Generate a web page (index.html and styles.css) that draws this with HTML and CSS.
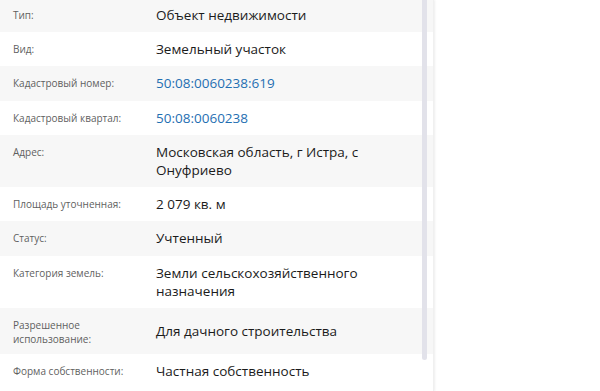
FILE: index.html
```html
<!DOCTYPE html>
<html lang="ru">
<head>
<meta charset="utf-8">
<title>Объект недвижимости</title>
<link rel="stylesheet" href="styles.css">
</head>
<body>
<div class="panel">
  <div class="props">
    <div class="row"><div class="label">Тип:</div><div class="value">Объект недвижимости</div></div>
    <div class="row"><div class="label">Вид:</div><div class="value">Земельный участок</div></div>
    <div class="row"><div class="label">Кадастровый номер:</div><div class="value"><a class="link" href="#">50:08:0060238:619</a></div></div>
    <div class="row"><div class="label">Кадастровый квартал:</div><div class="value"><a class="link" href="#">50:08:0060238</a></div></div>
    <div class="row"><div class="label">Адрес:</div><div class="value">Московская область, г Истра, с Онуфриево</div></div>
    <div class="row"><div class="label">Площадь уточненная:</div><div class="value">2 079 кв. м</div></div>
    <div class="row"><div class="label">Статус:</div><div class="value">Учтенный</div></div>
    <div class="row"><div class="label">Категория земель:</div><div class="value">Земли сельскохозяйственного назначения</div></div>
    <div class="row"><div class="label">Разрешенное использование:</div><div class="value">Для дачного строительства</div></div>
    <div class="row"><div class="label">Форма собственности:</div><div class="value">Частная собственность</div></div>
  </div>
  <div class="scroll-thumb"></div>
</div>
</body>
</html>
```
FILE: styles.css
```css
html, body {
  margin: 0;
  padding: 0;
  background: #ffffff;
  overflow: hidden;
  height: 100%;
}

body {
  font-family: "Open Sans", "Noto Sans", sans-serif;
}

.panel {
  position: relative;
  width: 433px;
  height: 100%;
  overflow: hidden;
  box-shadow: 1px 0 2px rgba(0, 0, 0, 0.07);
  border-right: 1px solid #f0f0f0;
}

.props {
  margin-top: -2px;
}

.row {
  display: flex;
  align-items: center;
  padding: 8px 0;
}

.row:nth-child(odd) {
  background: #f7f7f7;
}

.label {
  align-self: flex-start;
  box-sizing: border-box;
  flex: 0 0 156px;
  padding: 2px 13px 0 13px;
  font-size: 10px;
  line-height: 14px;
  color: #5f5f5f;
}

.value {
  flex: 0 0 250px;
  font-size: 13.5px;
  line-height: 18.2px;
  color: #1b1b1b;
}

.link {
  color: #1f6fb2;
  text-decoration: none;
}

.scroll-thumb {
  position: absolute;
  top: 0;
  left: 422px;
  width: 5px;
  height: 360px;
  background: #e2e2ea;
  border-radius: 0 0 3px 3px;
}
```
